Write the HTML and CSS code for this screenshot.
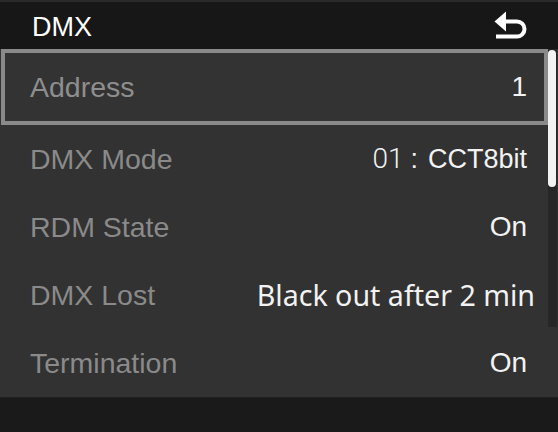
FILE: index.html
```html
<!DOCTYPE html>
<html>
<head>
<meta charset="utf-8">
<link rel="stylesheet" href="styles.css">
</head>
<body>
<div class="screen">
  <header class="topbar">
    <span class="title">DMX</span>
    <span class="back">
      <svg width="38" height="32" viewBox="0 0 38 32">
        <polygon points="2.5,12.5 14,2.5 14,22.5" fill="#fff"/>
        <path d="M12 12.5 H25 A7.5 7.5 0 0 1 25 27.5 H4" fill="none" stroke="#fff" stroke-width="4"/>
      </svg>
    </span>
  </header>
  <div class="list">
    <div class="row row-selected"><span class="label">Address</span><span class="value">1</span></div>
    <div class="row"><span class="label">DMX Mode</span><span class="value value-mode"><span class="num">01</span><span class="colon">:</span>CCT8bit</span></div>
    <div class="row"><span class="label">RDM State</span><span class="value">On</span></div>
    <div class="row"><span class="label">DMX Lost</span><span class="value value-long">Black out after 2 min</span></div>
    <div class="row"><span class="label">Termination</span><span class="value">On</span></div>
    <div class="scrollbar"><div class="thumb"></div></div>
  </div>
  <div class="footer"></div>
</div>
</body>
</html>
```
FILE: styles.css
```css
html, body {
  margin: 0;
  padding: 0;
  background: #1a1a1a;
}
.screen {
  width: 558px;
  height: 432px;
  display: flex;
  flex-direction: column;
  font-family: "Liberation Sans", Arial, sans-serif;
  overflow: hidden;
}
.topbar {
  box-sizing: border-box;
  height: 49px;
  border-top: 2px solid #2a2a2a;
  background: #171717;
  display: flex;
  align-items: center;
  justify-content: space-between;
  padding: 3px 28px 0 32px;
}
.title {
  color: #fff;
  font-size: 27px;
  line-height: 1;
}
.back {
  display: flex;
  margin-top: -5px;
}
.list {
  position: relative;
  height: 348px;
  background: #323232;
  display: flex;
  flex-direction: column;
}
.row {
  flex: 1;
  box-sizing: border-box;
  margin-right: 10px;
  display: flex;
  align-items: center;
  justify-content: space-between;
  padding: 0 21px 0 30px;
}
.row-selected {
  margin-left: 1px;
  border: 4px solid #8a8a8a;
  background: #333333;
  padding: 0 17px 0 25px;
}
.label {
  color: #8a8a8a;
  font-size: 28.5px;
  line-height: 1;
}
.row-selected .label {
  color: #8e8e8e;
}
.value {
  color: #f2f2f2;
  font-size: 28px;
  line-height: 1;
}
.value-mode {
  font-size: 27px;
}
.num {
  font-family: Roboto, "Liberation Sans", sans-serif;
  font-weight: 300;
  font-size: 28px;
}
.colon {
  margin: 0 10px 0 7px;
}
.value-long {
  font-family: "Noto Sans", "Liberation Sans", sans-serif;
  font-size: 28.6px;
  margin-right: -8px;
}
.scrollbar {
  position: absolute;
  right: 1px;
  top: 0;
  width: 9px;
  height: 278px;
  background: #272727;
}
.thumb {
  margin-top: 1px;
  width: 8px;
  height: 137px;
  background: #f2f2f2;
  border-radius: 4px;
}
.footer {
  flex: 1;
  background: #1a1a1a;
  border-top: 1px solid #202020;
}
```
